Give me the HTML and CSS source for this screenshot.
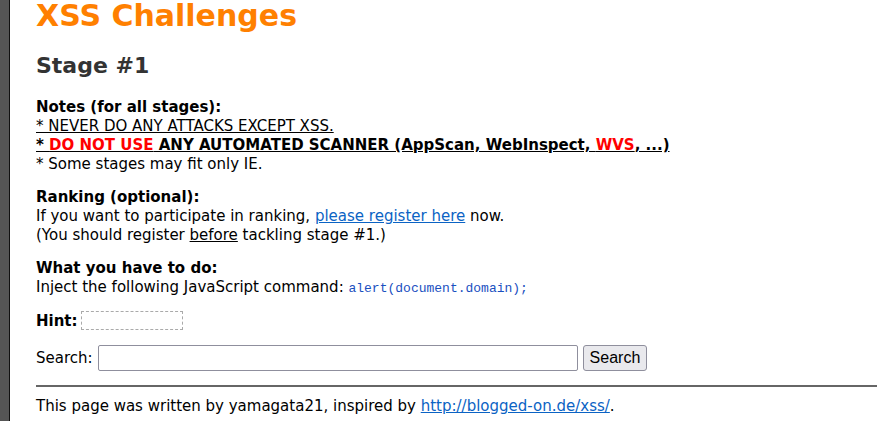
FILE: index.html
```html
<!DOCTYPE html>
<html>
<head>
<meta charset="utf-8">
<link rel="stylesheet" href="styles.css">
</head>
<body>
<div class="frame">
  <div class="content">
    <h1 class="title">XSS Challenges</h1>
    <h2 class="stage">Stage #1</h2>
    <div class="block">
      <div class="label">Notes (for all stages):</div>
      <div class="u">* NEVER DO ANY ATTACKS EXCEPT XSS.</div>
      <div class="u strong">* <span class="red">DO NOT USE</span> ANY AUTOMATED SCANNER (AppScan, WebInspect, <span class="red">WVS</span>, ...)</div>
      <div>* Some stages may fit only IE.</div>
    </div>
    <div class="block">
      <div class="label">Ranking (optional):</div>
      <div>If you want to participate in ranking, <a href="#">please register here</a> now.</div>
      <div>(You should register <span class="u">before</span> tackling stage #1.)</div>
    </div>
    <div class="block">
      <div class="label">What you have to do:</div>
      <div>Inject the following JavaScript command: <code class="code">alert(document.domain);</code></div>
    </div>
    <div class="hintrow">
      <span class="label">Hint:</span><span class="hintbox"></span>
    </div>
    <form class="search">
      <label class="slabel">Search:</label><input class="sinput" type="text"><button class="sbtn" type="button">Search</button>
    </form>
    <hr class="rule">
    <div class="footer">This page was written by yamagata21, inspired by <a href="#">http://blogged-on.de/xss/</a>.</div>
  </div>
</div>
</body>
</html>
```
FILE: styles.css
```css
html, body {
  margin: 0;
  padding: 0;
  background: #fff;
}
body {
  font-family: "DejaVu Sans", Verdana, sans-serif;
  font-size: 15px;
  color: #000;
  overflow: hidden;
}
.frame {
  height: 421px;
  border-left: 9px solid #555;
  display: flex;
}
.frame::before {
  content: "";
  width: 1px;
  background: #111;
}
.content {
  flex: 1;
  padding-left: 26px;
  padding-right: 11px;
}
.title {
  margin: 0;
  font-size: 30px;
  line-height: 32px;
  color: #ff8000;
  font-weight: bold;
}
.stage {
  margin: 20px 0 0;
  font-size: 22px;
  line-height: 28px;
  color: #333;
}
.block {
  margin-top: 18px;
  line-height: 19px;
}
.block + .block { margin-top: 14px; }
.label { font-weight: bold; }
.u { text-decoration: underline; }
.strong { font-weight: bold; }
.red { color: #f00; }
a { color: #0b63c4; }
.code {
  font-family: "Liberation Mono", monospace;
  font-size: 13px;
  color: #1a4fbf;
}
.hintrow {
  margin-top: 13px;
  display: flex;
  align-items: center;
  gap: 3px;
}
.hintbox {
  width: 100px;
  height: 17px;
  border: 1px dashed #aaa;
}
.search {
  margin: 15px 0 0;
  display: flex;
  align-items: center;
}
.slabel { margin-right: 5px; }
.sinput {
  width: 478px;
  height: 24px;
  padding: 0;
  border: 1px solid #8f8f9d;
  border-radius: 2px;
  margin: 0;
}
.sbtn {
  margin-left: 5px;
  height: 26px;
  padding: 0 6px;
  font-family: "Liberation Sans", Arial, sans-serif;
  font-size: 16px;
  background: #e9e9ed;
  border: 1px solid #8f8f9d;
  border-radius: 3px;
  color: #000;
}
.rule {
  margin: 14px 0 0;
  border: 0;
  height: 2px;
  background: #666;
}
.footer {
  margin-top: 10px;
}
```
